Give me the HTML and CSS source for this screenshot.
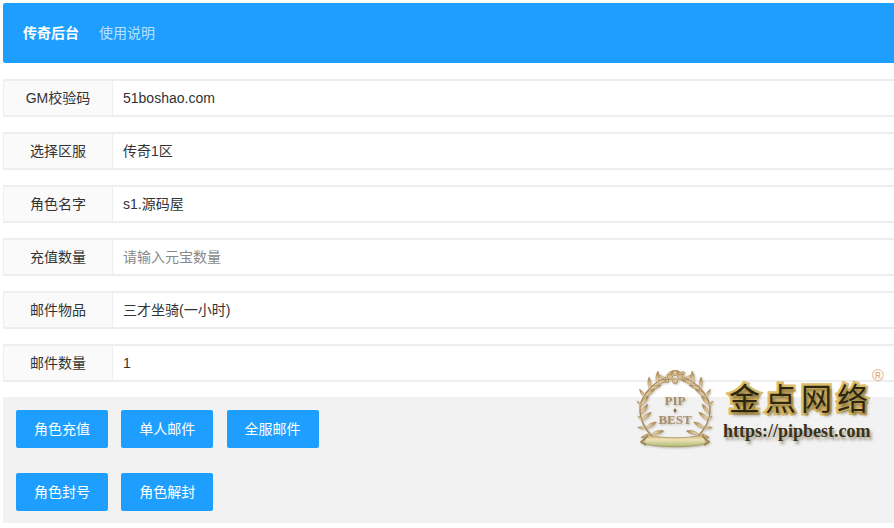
FILE: index.html
```html
<!DOCTYPE html>
<html lang="zh-CN">
<head>
<meta charset="utf-8">
<title>传奇后台</title>
<link rel="stylesheet" href="styles.css">
</head>
<body>
<div class="page">
  <nav class="nav">
    <a class="nav-item active">传奇后台</a>
    <a class="nav-item">使用说明</a>
  </nav>
  <form class="form">
    <div class="row"><label class="label">GM校验码</label><div class="value">51boshao.com</div></div>
    <div class="row"><label class="label">选择区服</label><div class="value">传奇1区</div></div>
    <div class="row"><label class="label">角色名字</label><div class="value">s1.源码屋</div></div>
    <div class="row"><label class="label">充值数量</label><div class="value placeholder">请输入元宝数量</div></div>
    <div class="row"><label class="label">邮件物品</label><div class="value">三才坐骑(一小时)</div></div>
    <div class="row"><label class="label">邮件数量</label><div class="value">1</div></div>
    <div class="actions">
      <div class="btn-row"><span class="btn">角色充值</span><span class="btn">单人邮件</span><span class="btn">全服邮件</span></div>
      <div class="btn-row"><span class="btn">角色封号</span><span class="btn">角色解封</span></div>
    </div>
  </form>
</div>
<div class="mark">
  <svg class="emblem" width="84" height="84" viewBox="0 0 84 84">
    <defs>
      <linearGradient id="gold" x1="0" y1="0" x2="1" y2="0">
        <stop offset="0" stop-color="#f4e8cc"/><stop offset=".55" stop-color="#d8b67e"/><stop offset="1" stop-color="#8f7040"/>
      </linearGradient>
      <linearGradient id="ribbon" x1="0" y1="0" x2="0" y2="1">
        <stop offset="0" stop-color="#c9a264"/><stop offset=".45" stop-color="#efe2b4"/><stop offset="1" stop-color="#a9bb73"/>
      </linearGradient>
      <path id="leaf" d="M0 0C3-2.2 8-2.2 12 0 8 1.8 3 1.8 0 0Z" fill="url(#gold)" stroke="#9a7c4a" stroke-width=".4"/>
      <g id="side">
        <path d="M31 9C14 16 3 30 4 44c.6 9 5 17 12 24" fill="none" stroke="#a4834f" stroke-width="1.3"/>
        <use href="#leaf" transform="translate(29 10) rotate(-40)"/>
        <use href="#leaf" transform="translate(29 10) rotate(-160) scale(.8)"/>
        <use href="#leaf" transform="translate(21 15) rotate(-15)"/>
        <use href="#leaf" transform="translate(21 15) rotate(-85)"/>
        <use href="#leaf" transform="translate(14 21) rotate(-20)"/>
        <use href="#leaf" transform="translate(14 21) rotate(-95)"/>
        <use href="#leaf" transform="translate(9 28) rotate(-35)"/>
        <use href="#leaf" transform="translate(9 29) rotate(-125) scale(.8)"/>
        <use href="#leaf" transform="translate(5 37) rotate(-50)"/>
        <use href="#leaf" transform="translate(6 38) rotate(-135) scale(.6)"/>
        <use href="#leaf" transform="translate(5 46) rotate(-55)"/>
        <use href="#leaf" transform="translate(6 52) rotate(-40)"/>
        <use href="#leaf" transform="translate(6 52) rotate(-135) scale(.5)"/>
        <use href="#leaf" transform="translate(10 60) rotate(-30)"/>
        <use href="#leaf" transform="translate(10 60) rotate(-175) scale(.7)"/>
        <use href="#leaf" transform="translate(16 66) rotate(-15)"/>
        <use href="#leaf" transform="translate(15 66) rotate(-200) scale(.9)"/>
      </g>
    </defs>
    <use href="#side"/>
    <use href="#side" transform="translate(78 0) scale(-1 1)"/>
    <g class="crown">
      <circle cx="39" cy="5" r="2.6"/><circle cx="34" cy="9" r="2.6"/><circle cx="44" cy="9" r="2.6"/><circle cx="39" cy="13" r="2.6"/><circle cx="47" cy="5" r="1.6"/><circle cx="31" cy="13" r="1.6"/>
    </g>
    <path d="M11 66c8 5 48 5 56 0l3 9c-9 5-53 5-62 0Z" fill="url(#ribbon)" stroke="#9a8450" stroke-width=".6"/>
    <path d="M12 68l-7 6 5 3M66 68l7 6-5 3" fill="none" stroke="#9a7c4a" stroke-width="1.6"/>
    <text class="emblem-text" x="39" y="37" text-anchor="middle">PIP</text>
    <path d="M39 40l1.6 2.5-1.6 2.5-1.6-2.5Z" fill="#8a6c3c"/>
    <text class="emblem-text" x="39" y="56" text-anchor="middle">BEST</text>
  </svg>
  <div class="brand">金点网络</div>
  <div class="url">https://pipbest.com</div>
  <div class="reg">®</div>
</div>
</body>
</html>
```
FILE: styles.css
```css
html, body { margin: 0; padding: 0; height: 528px; overflow: hidden; background: #fff; }
body { position: relative; font: 14px/20px "Liberation Sans", "Noto Sans CJK SC", sans-serif; color: #333; }
.page { margin: 3px 0 0 3px; width: 900px; }
.nav { height: 60px; background: #1e9fff; border-radius: 2px; display: flex; align-items: center; padding-left: 20px; gap: 20px; }
.nav-item { color: rgba(255,255,255,.7); }
.nav-item.active { color: #fff; font-weight: 700; }
.form { padding-top: 16px; display: flex; flex-direction: column; }
.row { height: 38px; box-sizing: border-box; display: flex; border: 1px solid #eee; border-width: 2px 0 2px 1px; margin-bottom: 15px; }
.label { width: 109px; box-sizing: border-box; background: #fafafa; border-right: 1px solid #eee; text-align: center; line-height: 34px; }
.value { flex: 1; padding-left: 10px; line-height: 34px; color: #333; }
.placeholder { color: #888; }
.actions { background: #f2f2f2; height: 126px; box-sizing: border-box; padding: 13px 13px 0; display: flex; flex-direction: column; gap: 25px; }
.btn-row { display: flex; gap: 13.3px; }
.btn { width: 92px; height: 38px; background: #1e9fff; color: #fff; border-radius: 2px; text-align: center; line-height: 38px; }
.mark { position: absolute; left: 636px; top: 368px; width: 258px; height: 90px; }
.emblem { position: absolute; left: 0; top: 0; filter: drop-shadow(1px 1px 1px rgba(90,70,30,.35)); }
.crown circle { fill: #d9bf8e; stroke: #8f7040; stroke-width: .5; }
.emblem-text { font: 700 13px "Liberation Serif", serif; fill: #a78f6c; }
.brand { position: absolute; left: 93px; top: 10px; font: 400 31px/38px "Noto Sans CJK SC", serif; letter-spacing: 5px; color: #2e2710; -webkit-text-stroke: 5px #dcbd6c; paint-order: stroke fill; white-space: nowrap; text-shadow: 2px 3px 3px rgba(60,45,15,.55); }
.url { position: absolute; left: 87px; top: 53px; font: 700 18px/20px "Liberation Serif", serif; color: #3a3116; white-space: nowrap; text-shadow: 2px 3px 3px rgba(70,55,20,.5); }
.reg { position: absolute; left: 235px; top: 1px; width: 14px; height: 14px; font: 16px/14px "Liberation Sans", sans-serif; text-align: center; color: #e0a878; }
```
